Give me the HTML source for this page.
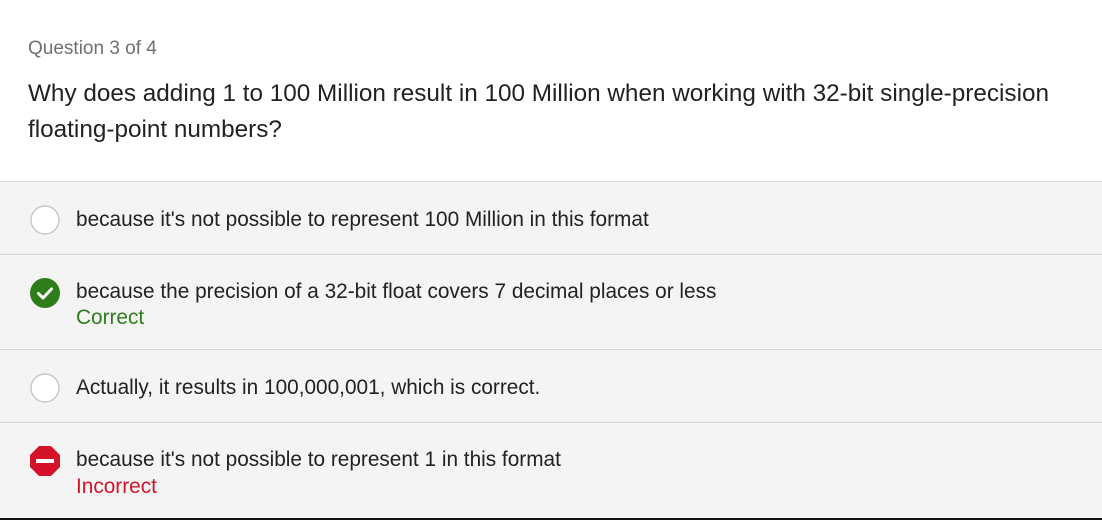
<!DOCTYPE html>
<html><head><style>
body{margin:0;width:1102px;height:519px;background:#fff;font-family:"Liberation Sans",sans-serif;overflow:hidden;position:relative}
.q{position:absolute;left:28px;top:38px;font-size:19px;color:#707070}
.t{position:absolute;left:28px;top:76px;font-size:24.3px;line-height:36px;color:#222;width:1060px}
.row{position:absolute;left:0;width:1102px;background:#f4f4f4;border-top:1px solid #d6d6d6}
.row .tx{position:absolute;left:76px;font-size:20.8px;color:#222}
.row .st{position:absolute;left:76px;font-size:20.8px}
.ic{position:absolute;left:30px;width:30px;height:30px}
</style></head><body>
<div class="q">Question 3 of 4</div>
<div class="t">Why does adding 1 to 100 Million result in 100 Million when working with 32-bit single-precision floating-point numbers?</div>

<div class="row" style="top:181px;height:72px">
<svg class="ic" style="top:23px" viewBox="0 0 30 30"><circle cx="15" cy="15" r="14" fill="#fff" stroke="#c8c8c8" stroke-width="1.5"/></svg>
<div class="tx" style="top:26px">because it's not possible to represent 100 Million in this format</div>
</div>

<div class="row" style="top:254px;height:94px">
<svg class="ic" style="top:23px" viewBox="0 0 30 30"><circle cx="15" cy="15" r="15" fill="#2e7d1b"/><path d="M8.5 15.5l4.5 4.5 8.5-9" fill="none" stroke="#fff" stroke-width="3" stroke-linecap="round" stroke-linejoin="round"/></svg>
<div class="tx" style="top:25px">because the precision of a 32-bit float covers 7 decimal places or less</div>
<div class="st" style="top:51px;color:#2e7d1b">Correct</div>
</div>

<div class="row" style="top:349px;height:72px">
<svg class="ic" style="top:23px" viewBox="0 0 30 30"><circle cx="15" cy="15" r="14" fill="#fff" stroke="#c8c8c8" stroke-width="1.5"/></svg>
<div class="tx" style="top:26px">Actually, it results in 100,000,001, which is correct.</div>
</div>

<div class="row" style="top:422px;height:95px;border-bottom:2px solid #111">
<svg class="ic" style="top:23px" viewBox="0 0 30 30"><polygon points="9,0 21,0 30,9 30,21 21,30 9,30 0,21 0,9" fill="#d4132a"/><rect x="6" y="13" width="18" height="4" fill="#fff"/></svg>
<div class="tx" style="top:25px">because it's not possible to represent 1 in this format</div>
<div class="st" style="top:52px;color:#d4132a">Incorrect</div>
</div>
</body></html>
